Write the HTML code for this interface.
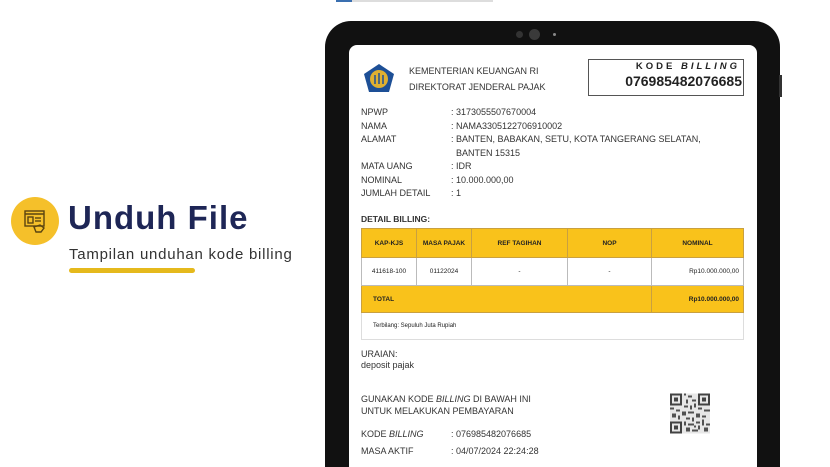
<!DOCTYPE html>
<html><head><meta charset="utf-8"><style>
*{margin:0;padding:0;box-sizing:border-box}
html,body{width:830px;height:467px;overflow:hidden}
body{background:#fff;position:relative;font-family:"Liberation Sans",sans-serif;color:#222}
.a{position:absolute}
.doc{font-size:9px;color:#333;line-height:11px}
table{border-collapse:collapse;position:absolute;left:361px;top:228px;width:383px;font-size:6.5px}
td{border:1px solid #bbb;text-align:center;font-weight:bold}
.y td{background:#f9c21b;border-color:#c9a040}
</style></head><body>
<div class="a" style="left:336px;top:0;width:16px;height:2px;background:#3a6fb0"></div>
<div class="a" style="left:352px;top:0;width:141px;height:2px;background:#ddd"></div>

<div class="a" style="left:11px;top:197px;width:48px;height:48px;border-radius:50%;background:#f5c02a"></div>
<svg class="a" style="left:22px;top:208px" width="26" height="26" viewBox="0 0 26 26" fill="none" stroke="#5a4410" stroke-width="1.4"><rect x="3" y="3" width="19" height="15"/><line x1="3" y1="6" x2="22" y2="6"/><rect x="6" y="9" width="5" height="6"/><line x1="13" y1="10" x2="19" y2="10"/><line x1="13" y1="13" x2="19" y2="13"/><path d="M14 24l-2-5 6-2 4 3-3 4z"/></svg>
<div class="a" style="left:68px;top:199px;font-size:33px;font-weight:bold;color:#1e2656;letter-spacing:1px">Unduh File</div>
<div class="a" style="left:69px;top:246px;font-size:15px;color:#333;letter-spacing:0.75px">Tampilan unduhan kode billing</div>
<div class="a" style="left:69px;top:268px;width:126px;height:5px;border-radius:3px;background:#e5b91c"></div>

<div class="a" style="left:325px;top:21px;width:455px;height:446px;background:#111;border-radius:26px 26px 0 0"></div>
<div class="a" style="left:779px;top:75px;width:3px;height:22px;background:#333"></div>
<div class="a" style="left:516px;top:31px;width:7px;height:7px;border-radius:50%;background:#333"></div>
<div class="a" style="left:529px;top:29px;width:11px;height:11px;border-radius:50%;background:#3a3a3a"></div>
<div class="a" style="left:553px;top:33px;width:3px;height:3px;border-radius:50%;background:#888"></div>
<div class="a" style="left:349px;top:45px;width:408px;height:422px;background:#fff;border-radius:8px 8px 0 0"></div>

<svg class="a" style="left:363px;top:63px" width="32" height="30" viewBox="0 0 32 30"><path d="M16 1 L31 11 L26 29 L6 29 L1 11Z" fill="#1d4f96"/><circle cx="16" cy="16" r="9" fill="#e0b030"/><path d="M12 12v9M16 10v11M20 12v9" stroke="#1d4f96" stroke-width="1.5"/></svg>
<div class="a doc" style="left:409px;top:66px;font-size:9px">KEMENTERIAN KEUANGAN RI</div>
<div class="a doc" style="left:409px;top:82px;font-size:9px">DIREKTORAT JENDERAL PAJAK</div>
<div class="a" style="left:588px;top:59px;width:156px;height:37px;border:1px solid #555"></div>
<div class="a" style="left:588px;top:61px;width:152px;text-align:right;font-size:9.5px;font-weight:bold;letter-spacing:3px">KODE <i>BILLING</i></div>
<div class="a" style="left:588px;top:73px;width:154px;text-align:right;font-size:14px;font-weight:bold">076985482076685</div>

<div class="a doc" style="left:361px;top:106px;line-height:13.5px">NPWP<br>NAMA<br>ALAMAT<br><br>MATA UANG<br>NOMINAL<br>JUMLAH DETAIL</div>
<div class="a doc" style="left:451px;top:106px;line-height:13.5px">: 3173055507670004<br>: NAMA3305122706910002<br>: BANTEN, BABAKAN, SETU, KOTA TANGERANG SELATAN,<br>&nbsp;&nbsp;BANTEN 15315<br>: IDR<br>: 10.000.000,00<br>: 1</div>

<div class="a doc" style="left:361px;top:214px;font-weight:bold;font-size:8.5px">DETAIL BILLING:</div>
<table>
<tr class="y" style="height:29px"><td style="width:55px">KAP-KJS</td><td style="width:55px">MASA PAJAK</td><td style="width:96px">REF TAGIHAN</td><td style="width:84px">NOP</td><td>NOMINAL</td></tr>
<tr style="height:28px"><td style="font-weight:normal">411618-100</td><td style="font-weight:normal">01122024</td><td style="font-weight:normal">-</td><td style="font-weight:normal">-</td><td style="font-weight:normal;text-align:right;padding-right:4px">Rp10.000.000,00</td></tr>
<tr class="y" style="height:27px"><td colspan="4" style="text-align:left;padding-left:11px">TOTAL</td><td style="text-align:right;padding-right:4px">Rp10.000.000,00</td></tr>
<tr style="height:27px"><td colspan="5" style="text-align:left;padding-left:11px;font-weight:normal;font-size:6px;border-color:#ddd">Terbilang: Sepuluh Juta Rupiah</td></tr>
</table>

<div class="a doc" style="left:361px;top:349px">URAIAN:<br>deposit pajak</div>
<div class="a doc" style="left:361px;top:393px;line-height:12px">GUNAKAN KODE <i>BILLING</i> DI BAWAH INI<br>UNTUK MELAKUKAN PEMBAYARAN</div>
<div class="a doc" style="left:361px;top:426px;line-height:16.5px">KODE <i>BILLING</i><br>MASA AKTIF</div>
<div class="a doc" style="left:451px;top:426px;line-height:16.5px">: 076985482076685<br>: 04/07/2024 22:24:28</div>
<svg class="a" style="left:670px;top:393px" width="40" height="41" viewBox="0 0 20 20" shape-rendering="crispEdges"><rect width="20" height="20" fill="#fff"/><path d="M0 0h6v6h-6zM14 0h6v6h-6zM0 14h6v6h-6z" fill="#333"/><path d="M1 1h4v4h-4zM15 1h4v4h-4zM1 15h4v4h-4z" fill="#fff"/><path d="M2 2h2v2h-2zM16 2h2v2h-2zM2 16h2v2h-2z" fill="#333"/><path d="M7 0h1v1h-1zM9 1h2v1h-2zM8 3h1v2h-1zM11 3h2v1h-2zM7 6h2v1h-2zM10 6h1v2h-1zM12 5h1v2h-1zM0 7h2v1h-2zM3 8h2v1h-2zM14 7h2v1h-2zM17 8h3v1h-3zM6 9h2v2h-2zM9 9h3v1h-3zM13 10h2v2h-2zM16 11h2v1h-2zM1 10h2v2h-2zM4 11h1v2h-1zM8 12h2v1h-2zM11 12h1v2h-1zM7 14h1v2h-1zM9 15h3v1h-3zM13 14h2v1h-2zM16 13h1v3h-1zM18 15h2v1h-2zM8 17h2v2h-2zM11 18h3v1h-3zM14 16h1v2h-1zM17 17h2v2h-2zM12 16h1v1h-1z" fill="#444"/><rect width="20" height="20" fill="#888" opacity="0.2"/></svg>
</body></html>
